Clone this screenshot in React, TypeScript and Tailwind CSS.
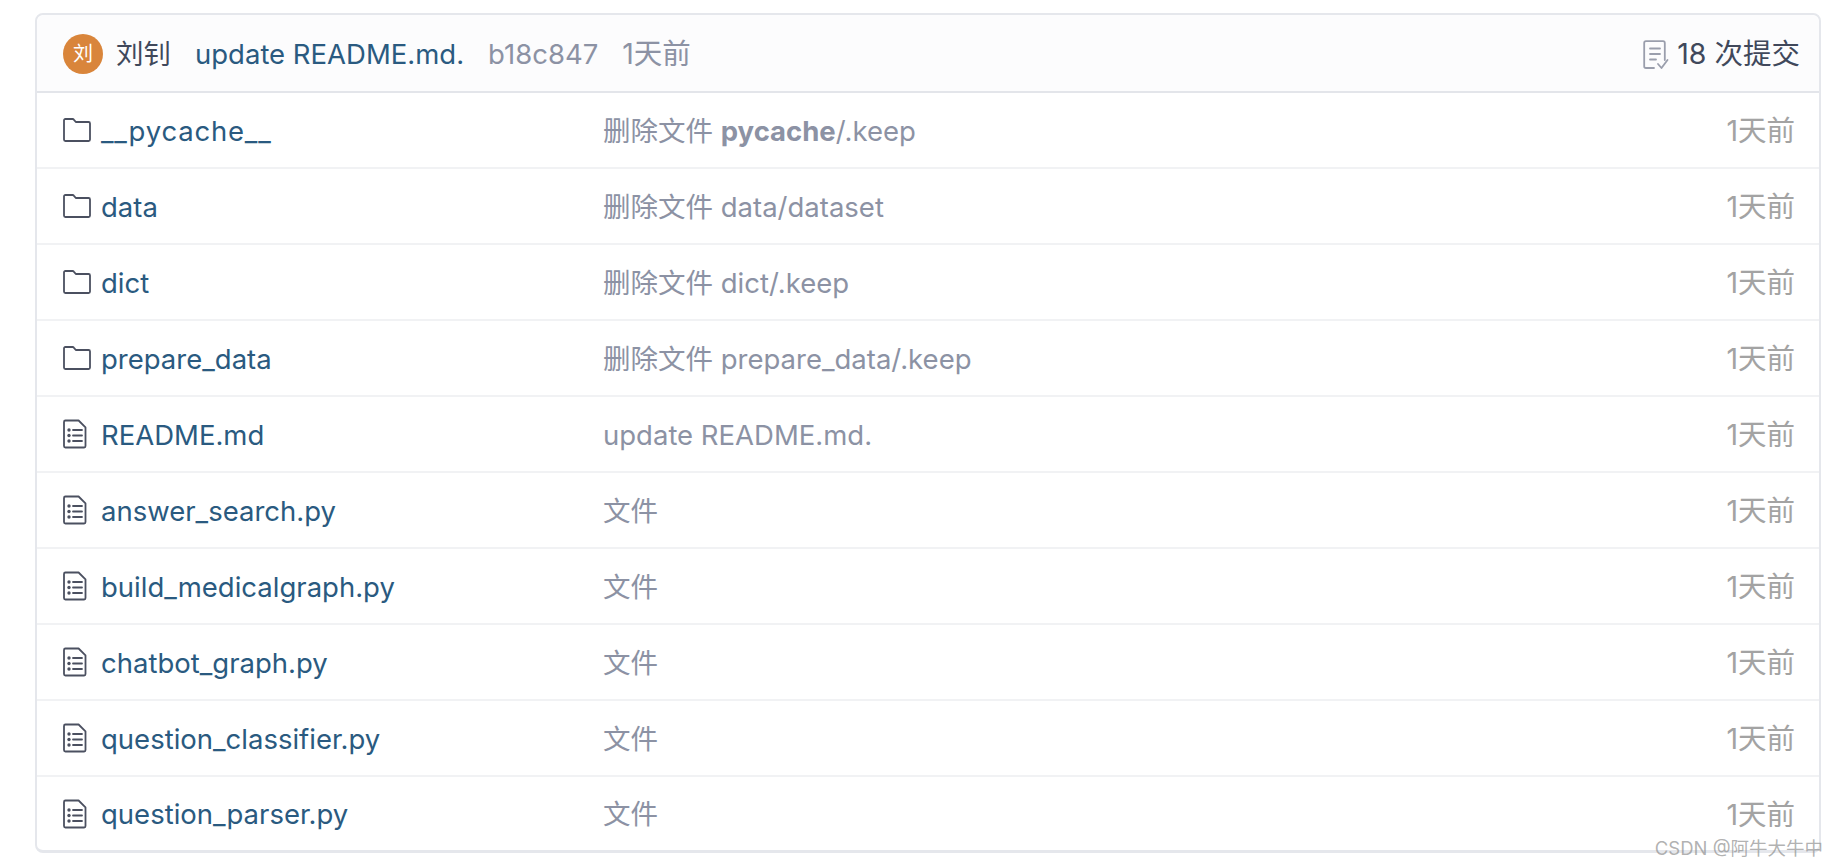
import React from 'react';

const FONT = "font-['Inter','Noto_Sans_CJK_SC',sans-serif]";

const FolderIcon = () => (
    <svg width="28" height="24" viewBox="0 0 28 24" fill="none" stroke="#4b5060" strokeWidth="1.8" strokeLinejoin="round" className="shrink-0">
        <path d="M1 2.4C1 1.6 1.6 1 2.4 1h7.2c.5 0 .9.2 1.2.6l2 2.4h12.8c.8 0 1.4.6 1.4 1.4v16.2c0 .8-.6 1.4-1.4 1.4H2.4c-.8 0-1.4-.6-1.4-1.4V2.4z" />
    </svg>
);

const FileIcon = () => (
    <svg width="24" height="30" viewBox="0 0 24 30" fill="none" stroke="#4b5060" strokeWidth="1.8" strokeLinejoin="round" className="shrink-0">
        <path d="M2.400 1.500h13.200l6.900 6.900v18.700c0 .8-.6 1.400-1.400 1.400H2.400c-.8 0-1.400-.6-1.400-1.400V2.900c0-.8.6-1.400 1.400-1.400z" />
        <path d="M10 11h9M10 16.500h9M10 22h9" strokeLinecap="round" />
        <g fill="#4b5060" stroke="none">
            <circle cx="6" cy="11" r="1.7" />
            <circle cx="6" cy="16.5" r="1.7" />
            <circle cx="6" cy="22" r="1.7" />
        </g>
    </svg>
);

const CommitIcon = () => (
    <svg width="26" height="30" viewBox="0 0 26 30" fill="none" stroke="#9a9eac" strokeWidth="1.8" strokeLinecap="round" strokeLinejoin="round" className="shrink-0">
        <path d="M11 28H3c-1 0-1.800-.8-1.800-1.800V3C1.200 2 2 1.200 3 1.200h17c1 0 1.800.8 1.800 1.800v17" />
        <path d="M7 8.500h10M7 14h10M7 19.500h6" />
        <path d="M15 24l3.500 4 6-8" />
    </svg>
);

type Row = { name: string; kind: 'folder' | 'file'; message: React.ReactNode };

const rows: Row[] = [
    { name: '__pycache__', kind: 'folder', message: <>删除文件 <strong className="font-bold">pycache</strong>/.keep</> },
    { name: 'data', kind: 'folder', message: '删除文件 data/dataset' },
    { name: 'dict', kind: 'folder', message: '删除文件 dict/.keep' },
    { name: 'prepare_data', kind: 'folder', message: '删除文件 prepare_data/.keep' },
    { name: 'README.md', kind: 'file', message: 'update README.md.' },
    { name: 'answer_search.py', kind: 'file', message: '文件' },
    { name: 'build_medicalgraph.py', kind: 'file', message: '文件' },
    { name: 'chatbot_graph.py', kind: 'file', message: '文件' },
    { name: 'question_classifier.py', kind: 'file', message: '文件' },
    { name: 'question_parser.py', kind: 'file', message: '文件' },
];

const App: React.FC = () => {
    return (
        <div className={`relative w-[1838px] h-[868px] overflow-hidden bg-white pl-[35px] pt-[13px] text-[27.500px] ${FONT}`}>
            <div className="w-[1786px] rounded-[8px] border-2 border-b-[3px] border-[#e5e7ec]">
                {/* Commit header */}
                <div className="h-[78px] flex items-center pt-[3px] pl-[26px] pr-[19px] bg-[#fcfcfd] rounded-t-[8px] border-b-2 border-[#e3e5ea]">
                    <div className="w-[40px] h-[40px] mb-[2px] rounded-full bg-[#d9853b] flex items-center justify-center text-white text-[20px] shrink-0">刘</div>
                    <span className="ml-[13px] text-[#40485b]">刘钊</span>
                    <span className="ml-[24px] text-[#2a5a80]">update README.md.</span>
                    <span className="ml-[24px] text-[#8c92a4]">b18c847</span>
                    <span className="ml-[24px] text-[#8c92a4] text-[28.500px]">1天前</span>
                    <div className="ml-auto flex items-center gap-[8px]">
                        <CommitIcon />
                        <span className="text-[#40485b] text-[28.500px]">18 次提交</span>
                    </div>
                </div>

                {/* File list */}
                {rows.map((row, i) => (
                    <div key={row.name} className={`flex items-center pt-[3px] pl-[26px] pr-[24px] ${i < rows.length - 1 ? 'h-[76px] border-b-2 border-[#f1f2f4]' : 'h-[73px]'}`}>
                        <div className="w-[540px] flex items-center">
                            <div className="w-[38px] mb-[3px] flex items-center">
                                {row.kind === 'folder' ? <FolderIcon /> : <FileIcon />}
                            </div>
                            <span className={`text-[#2a5a80] ${row.name === '__pycache__' ? 'tracking-[0.8px]' : ''}`}>{row.name}</span>
                        </div>
                        <div className="text-[#8c92a4]">{row.message}</div>
                        <div className="ml-auto text-[#a3a3a3] text-[28.500px]">1天前</div>
                    </div>
                ))}
            </div>

            {/* Watermark */}
            <div className="absolute right-[15px] bottom-[8px] text-[18.500px] leading-[24px] text-[#8f8f8f]/70">CSDN @阿牛大牛中</div>
        </div>
    );
};

export default App;
